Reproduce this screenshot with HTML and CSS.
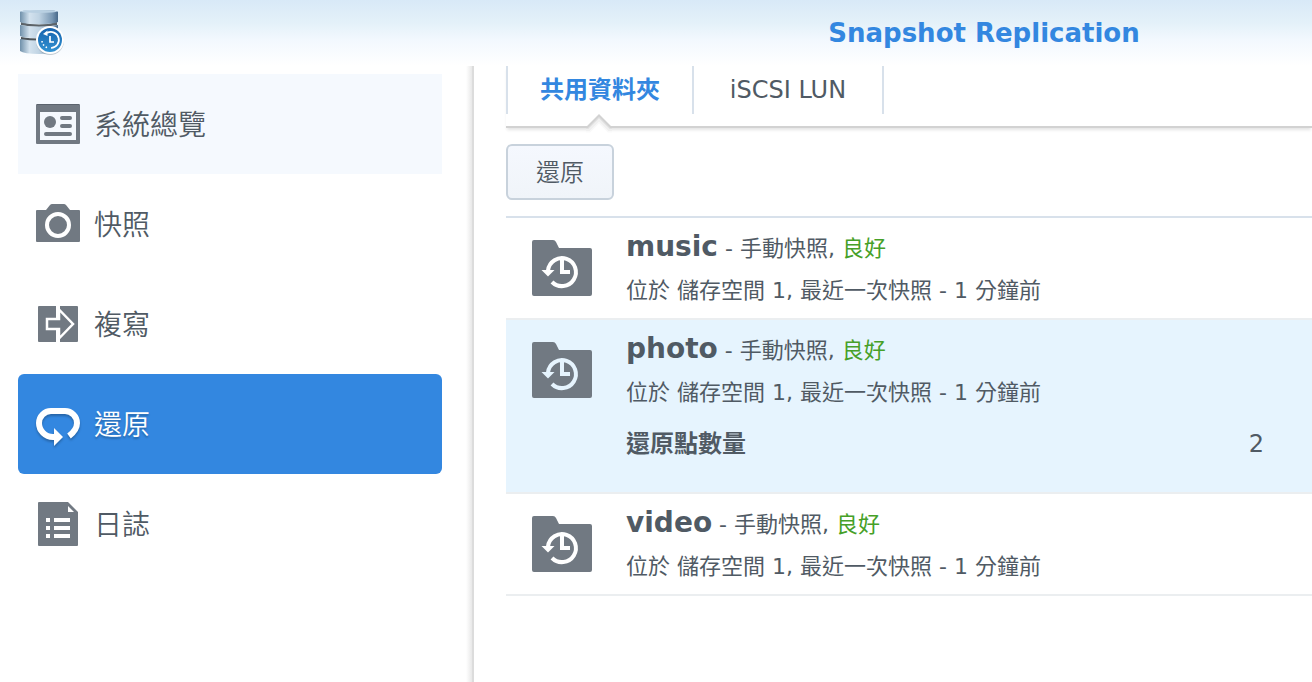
FILE: index.html
```html
<!DOCTYPE html>
<html lang="zh-Hant">
<head>
    <meta charset="UTF-8">
    <meta name="viewport" content="width=device-width,initial-scale=1">
    <title>Snapshot Replication</title>
    <link rel="stylesheet" href="styles.css">
</head>
<body>
    <!-- shared folder icon -->
    <svg class="defs" width="0" height="0" aria-hidden="true">
        <symbol id="folder" viewBox="0 0 60 56">
            <path fill="#717982" d="M2 0H21Q23 0 24 2L27 8H58Q60 8 60 10V54Q60 56 58 56H2Q0 56 0 54V2Q0 0 2 0Z"/>
            <path fill="none" stroke="currentColor" stroke-width="4" d="M16 30.500A14 14 0 1 1 20 42"/>
            <path fill="currentColor" d="M9.500 30H22.500L16 36.500Z"/>
            <path fill="none" stroke="currentColor" stroke-width="4" d="M30 18V32H38"/>
        </symbol>
    </svg>

    <header>
        <svg class="logo" width="48" height="48" viewBox="0 0 48 48" aria-hidden="true">
            <defs>
                <linearGradient id="metal" x1="0" x2="1">
                    <stop offset="0" stop-color="#6f90aa"/>
                    <stop offset=".25" stop-color="#d3e2ee"/>
                    <stop offset=".5" stop-color="#bfd3e3"/>
                    <stop offset=".85" stop-color="#7896b2"/>
                    <stop offset="1" stop-color="#48698a"/>
                </linearGradient>
                <linearGradient id="badge" x1="0" x2="0" y1="0" y2="1">
                    <stop offset="0" stop-color="#1763ae"/>
                    <stop offset="1" stop-color="#3192d2"/>
                </linearGradient>
            </defs>
            <path fill="#5c6368" d="M3 13Q21 18 39 13V16Q21 20 3 16Z"/>
            <path fill="#4c5358" d="M3 28Q21 31 39 28V31Q21 34 3 31Z"/>
            <path fill="url(#metal)" d="M2 30Q21 33 40 30V42Q36 45 21 45Q6 45 2 42Z"/>
            <path fill="url(#metal)" d="M2 16Q21 19 40 16V27Q36 29 21 29Q6 29 2 27Z"/>
            <path fill="url(#metal)" d="M2 3Q3 1 21 1Q39 1 40 3V13Q36 15 21 15Q6 15 2 13Z"/>
            <ellipse cx="21" cy="2.500" rx="18" ry="1.500" fill="#b9d0e2"/>
            <circle cx="32" cy="32" r="14" fill="#8b99a5" opacity=".5"/>
            <circle cx="32" cy="31" r="14" fill="#fff"/>
            <circle cx="32" cy="31" r="12" fill="url(#badge)"/>
            <path fill="none" stroke="#fff" stroke-width="1.700" d="M29 24A8 8 0 1 1 33 39"/>
            <path fill="#fff" d="M25 25L29.500 21.500V27Z"/>
            <path fill="none" stroke="#fff" stroke-width="1.700" d="M32 27V33H36"/>
            <path fill="none" stroke="#fff" stroke-width="1.500" stroke-dasharray="1.500 2" d="M24 32A8 8 0 0 0 30.500 39"/>
        </svg>
        <h1>Snapshot Replication</h1>
    </header>

    <div class="layout">
        <nav class="sidebar">
            <a href="#" class="hover">
                <svg width="44" height="44" viewBox="0 0 44 44" aria-hidden="true">
                    <path fill="#717982" fill-rule="evenodd" d="M1 2H43Q44 2 44 3V41Q44 42 43 42H1Q0 42 0 41V3Q0 2 1 2ZM4 10V38H40V10Z"/>
                    <path fill="#5b636d" d="M1 2H43V3H1Z"/>
                    <circle cx="14" cy="20" r="6" fill="#717982"/>
                    <path fill="none" stroke="#717982" stroke-width="4" stroke-linecap="round" d="M26 16H34M26 24H34M10 32H34"/>
                </svg>
                <span>系統總覽</span>
            </a>
            <a href="#">
                <svg width="44" height="44" viewBox="0 0 44 44" aria-hidden="true">
                    <path fill="#717982" d="M1 8H10L14 3Q15 2 16 2H28Q29 2 30 3L34 8H43Q44 8 44 9V39Q44 40 43 40H1Q0 40 0 39V9Q0 8 1 8Z"/>
                    <circle cx="22" cy="23" r="11" fill="none" stroke="#fff" stroke-width="4"/>
                </svg>
                <span>快照</span>
            </a>
            <a href="#">
                <svg width="44" height="44" viewBox="0 0 44 44" aria-hidden="true">
                    <path fill="#717982" d="M3 4H20V40H3Q2 40 2 39V5Q2 4 3 4ZM24 4H41Q42 4 42 5V39Q42 40 41 40H24Z"/>
                    <path fill="#717982" stroke="#fff" stroke-width="2.500" d="M11 17H23V7.500L37 22L23 36.500V27H11Z"/>
                </svg>
                <span>複寫</span>
            </a>
            <a href="#" class="active">
                <svg width="44" height="44" viewBox="0 0 44 44" aria-hidden="true">
                    <path fill="none" stroke="#fff" stroke-width="6" d="M19 35H17A14 14 0 0 1 3 21A12 12 0 0 1 15 9H29A12 12 0 0 1 41 21Q41 28 33 34"/>
                    <path fill="#fff" d="M18 26L27 35L18 44Z"/>
                </svg>
                <span>還原</span>
            </a>
            <a href="#">
                <svg width="44" height="44" viewBox="0 0 44 44" aria-hidden="true">
                    <path fill="#717982" d="M3 0H32L42 10V43Q42 44 41 44H3Q2 44 2 43V1Q2 0 3 0Z"/>
                    <path fill="#fff" d="M32 4V10H38ZM10 16H14V20H10ZM10 24H14V28H10ZM10 32H14V36H10ZM18 16H34V20H18ZM18 24H34V28H18ZM18 32H34V36H18Z"/>
                </svg>
                <span>日誌</span>
            </a>
        </nav>

        <main>
            <div class="tabs">
                <a href="#" class="tab active">共用資料夾
                    <svg class="pointer" width="28" height="20" viewBox="0 0 28 20" aria-hidden="true">
                        <path fill="#fff" d="M1 12L13 0L25 12V20H1Z"/>
                        <path fill="none" stroke="#f9f9f9" stroke-width="3" d="M0 17H3.500L13 7.500L22.500 17H26"/>
                        <path fill="none" stroke="#f0f0f0" stroke-width="3" d="M0 15.500H3L13 5.500L23 15.500H26"/>
                        <path fill="none" stroke="#e2e2e2" stroke-width="2" d="M0 14H2L13 3L24 14H26"/>
                        <path fill="none" stroke="#d2d2d2" stroke-width="2" d="M0 13H1.500L13 1.500L24.500 13H26"/>
                    </svg>
                </a>
                <a href="#" class="tab">iSCSI LUN</a>
            </div>

            <div class="toolbar">
                <button type="button">還原</button>
            </div>

            <ul class="folders">
                <li>
                    <svg class="folder" width="60" height="56" aria-hidden="true"><use href="#folder"/></svg>
                    <div class="info">
                        <p class="name"><strong>music</strong> - 手動快照, <span class="good">良好</span></p>
                        <p class="desc">位於 儲存空間 1, 最近一次快照 - 1 分鐘前</p>
                    </div>
                </li>
                <li class="selected">
                    <svg class="folder" width="60" height="56" aria-hidden="true"><use href="#folder"/></svg>
                    <div class="info">
                        <p class="name"><strong>photo</strong> - 手動快照, <span class="good">良好</span></p>
                        <p class="desc">位於 儲存空間 1, 最近一次快照 - 1 分鐘前</p>
                        <dl>
                            <dt>還原點數量</dt>
                            <dd>2</dd>
                        </dl>
                    </div>
                </li>
                <li>
                    <svg class="folder" width="60" height="56" aria-hidden="true"><use href="#folder"/></svg>
                    <div class="info">
                        <p class="name"><strong>video</strong> - 手動快照, <span class="good">良好</span></p>
                        <p class="desc">位於 儲存空間 1, 最近一次快照 - 1 分鐘前</p>
                    </div>
                </li>
            </ul>
        </main>
    </div>
</body>
</html>
```
FILE: styles.css
```css
* {
    box-sizing: border-box;
}
body {
    display: flex;
    flex-direction: column;
    min-height: 100vh;
    margin: 0;
    background: #fff;
    color: #505a64;
    font-family: Verdana, "DejaVu Sans", "Noto Sans CJK TC", sans-serif;
    font-size: 24px;
}
.defs {
    position: absolute;
}
a {
    color: inherit;
    text-decoration: none;
}
header {
    display: flex;
    align-items: center;
    height: 66px;
    padding-left: 18px;
    background: linear-gradient(#d8e9f7, #e4f1f9 35%, #f2f8fe 60%, #fff);
}
.logo {
    flex: none;
}
h1 {
    width: 50vw;
    margin: 0 0 0 auto;
    color: #3387e0;
    font-size: 26px;
    line-height: 32px;
    text-align: center;
}
.layout {
    display: flex;
    flex: 1;
}

/* Sidebar */
.sidebar {
    flex: 0 0 474px;
    padding: 8px 30px 0 18px;
    border-right: 2px solid #dcdcdc;
    background: linear-gradient(to left, #e8e8e8, #fff 6px);
}
.sidebar a {
    display: flex;
    align-items: center;
    gap: 14px;
    height: 100px;
    padding: 0 0 2px 18px;
    border-radius: 6px;
    font-size: 28px;
    font-weight: 350;
}
.sidebar svg {
    margin-top: 2px;
}
.sidebar .hover {
    border-radius: 0;
    background: #f5f9fe;
}
.sidebar .active {
    background: #3387e0;
    color: #fff;
    text-shadow: 0 2px 2px rgba(0,0,0,0.25);
}
.sidebar .active svg {
    filter: drop-shadow(0 2px 1px rgba(0,0,0,0.25));
}

/* Content */
main {
    flex: 1;
    min-width: 0;
    padding-left: 32px;
}
.tabs {
    display: flex;
    height: 62px;
    padding-bottom: 12px;
    border-bottom: 2px solid #d2d2d2;
    box-shadow: 0 3px 3px -1px #e4e4e4;
}
.tab {
    position: relative;
    padding: 0 32px;
    border-left: 2px solid #d8e1eb;
    line-height: 48px;
    white-space: nowrap;
}
.tab:last-child {
    min-width: 192px;
    border-right: 2px solid #d8e1eb;
    text-align: center;
}
.tab.active {
    color: #3387e0;
    font-weight: bold;
}
.pointer {
    position: absolute;
    top: 48px;
    left: calc(50% - 14px);
}
.toolbar {
    padding: 16px 0;
    border-bottom: 2px solid #d8e1eb;
}
button {
    display: block;
    height: 56px;
    padding: 0 28px 4px;
    border: 2px solid #c8d2dc;
    border-radius: 6px;
    background: linear-gradient(#f5f8fe, #f0f4f9);
    color: inherit;
    font: inherit;
    font-weight: 350;
}
.folders {
    margin: 0;
    padding: 0;
    list-style: none;
}
.folders li {
    display: flex;
    gap: 34px;
    padding: 8px 48px 6px 26px;
    border-bottom: 2px solid #ebeef0;
}
.folder {
    flex: none;
    margin-top: 14px;
    color: #fff;
}
.selected {
    background: #e6f4fe;
}
.selected .folder {
    color: #e6f4fe;
}
.info {
    flex: 1;
}
p {
    margin: 0;
    font-size: 22px;
    line-height: 42px;
}
.name strong {
    font-size: 28px;
}
.good {
    color: #46a028;
}
dl {
    display: flex;
    justify-content: space-between;
    margin: 0;
    padding: 10px 0 22px;
    line-height: 40px;
}
dt {
    font-weight: bold;
}
dd {
    margin: 0;
}
```
